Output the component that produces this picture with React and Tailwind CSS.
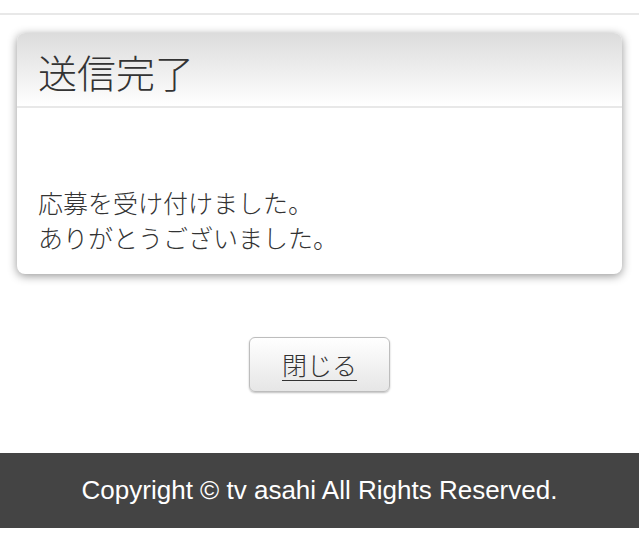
export default function App() {
  const jp = { fontFamily: '"Noto Sans CJK JP", "Noto Sans", sans-serif' };
  return (
    <div className="w-[639px] h-[557px] bg-white overflow-hidden" style={jp}>
      <div className="h-[13px]" />
      <div className="h-[2px] bg-[#e8e8e8]" />
      <div className="mx-[17px] mt-[18px] rounded-[8px] bg-white shadow-[0_2px_10px_rgba(0,0,0,0.42)] overflow-hidden">
        <div className="h-[75px] flex items-center pt-[3px] px-[21px] bg-gradient-to-b from-[#dcdcdc] to-white border-b-2 border-[#e8e8e8]">
          <h1 className="text-[39px] leading-none text-[#333] font-light">送信完了</h1>
        </div>
        <div className="pt-[77px] pb-[19px] px-[21px] text-[25px] leading-[35px] text-[#333] font-light">
          <p>応募を受け付けました。</p>
          <p>ありがとうございました。</p>
        </div>
      </div>
      <div className="flex justify-center mt-[63px]">
        <button className="w-[141px] h-[55px] rounded-[6px] border border-[#bdbdbd] bg-gradient-to-b from-white to-[#e6e6e6] shadow-[0_1px_2px_rgba(0,0,0,0.25)] text-[25px] text-[#333] font-light underline underline-offset-[5px] decoration-1">
          閉じる
        </button>
      </div>
      <div className="mt-[61px] h-[75px] bg-[#444] flex items-center justify-center">
        <span className="text-white text-[26px]" style={{ fontFamily: '"Liberation Sans", Arial, sans-serif' }}>
          Copyright © tv asahi All Rights Reserved.
        </span>
      </div>
    </div>
  );
}
